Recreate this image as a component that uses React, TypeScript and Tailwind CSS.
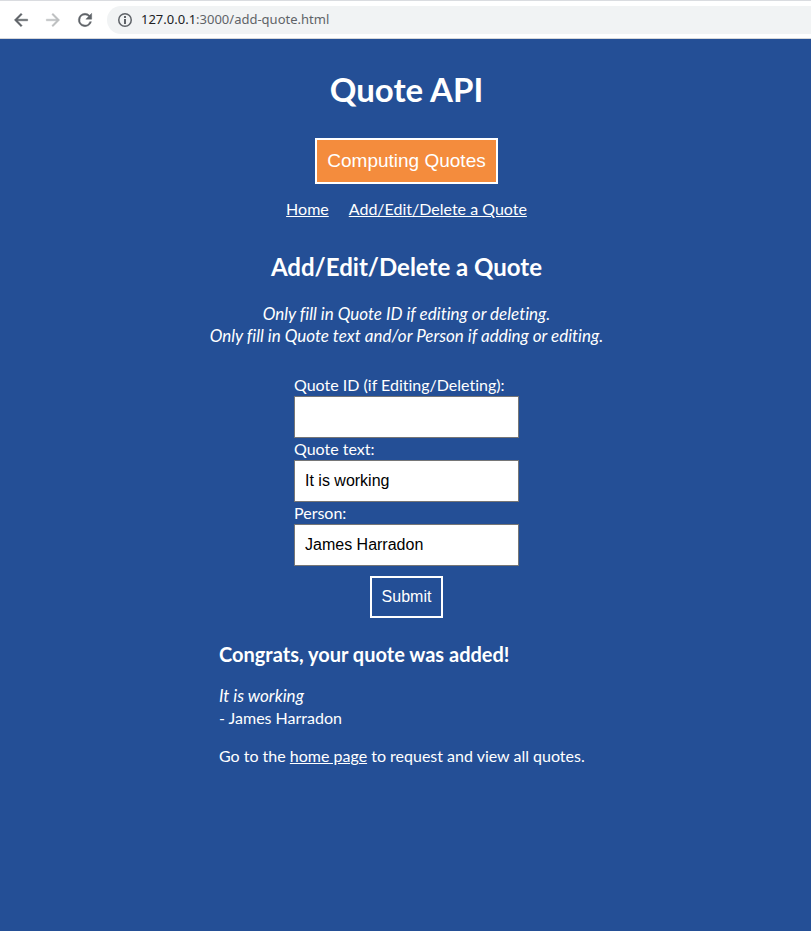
import type { ReactNode } from "react";

function BrowserBar() {
  return (
    <header className="flex h-[39px] items-center gap-[10px] border-t border-b border-t-[#dadce0] border-b-[#d5d6d9] bg-white pl-[9px] font-['Noto_Sans',sans-serif]">
      <div className="flex items-center gap-2 text-[#5f6368]">
        <button type="button" aria-label="Back" className="flex size-6 items-center justify-center">
          <svg viewBox="0 0 24 24" className="size-5" fill="currentColor" stroke="currentColor" strokeWidth="0.5">
            <path d="M20 11H7.83l5.59-5.59L12 4l-8 8 8 8 1.41-1.41L7.83 13H20v-2z" />
          </svg>
        </button>
        <button type="button" aria-label="Forward" className="flex size-6 items-center justify-center text-[#bdbfc1]">
          <svg viewBox="0 0 24 24" className="size-5" fill="currentColor" stroke="currentColor" strokeWidth="0.5">
            <path d="M12 4l-1.41 1.41L16.17 11H4v2h12.17l-5.58 5.59L12 20l8-8z" />
          </svg>
        </button>
        <button type="button" aria-label="Reload" className="flex size-6 items-center justify-center">
          <svg viewBox="0 0 24 24" className="size-5" fill="currentColor" stroke="currentColor" strokeWidth="0.5">
            <path d="M17.65 6.35A7.96 7.96 0 0 0 12 4a8 8 0 1 0 7.73 10h-2.08A6 6 0 1 1 12 6c1.66 0 3.14.69 4.22 1.78L13 11h7V4l-2.35 2.35z" />
          </svg>
        </button>
      </div>
      <div className="flex h-7 flex-1 items-center gap-2 rounded-l-full bg-[#f1f3f4] pl-[10px]">
        <svg viewBox="0 0 16 16" className="size-4 text-[#5f6368]" fill="none" stroke="currentColor" strokeWidth="1.5">
          <circle cx="8" cy="8" r="6.25" />
          <path d="M8 4v2M8 7v5" strokeWidth="2" />
        </svg>
        <p className="text-[13px] text-[#5f6368]">
          <span className="text-[#202124]">127.0.0.1</span>:3000/add-quote.html
        </p>
      </div>
    </header>
  );
}

function PageLink({ children }: { children: ReactNode }) {
  return (
    <a href="#" className="underline">
      {children}
    </a>
  );
}

function Field({ id, label, value }: { id: string; label: string; value?: string }) {
  return (
    <div className="flex flex-col">
      <label htmlFor={id}>{label}</label>
      <input
        id={id}
        type="text"
        defaultValue={value}
        className="h-[42px] border border-[#767676] bg-white px-[10px] font-['Liberation_Sans',sans-serif] text-black"
      />
    </div>
  );
}

export default function App() {
  return (
    <div className="flex min-h-screen flex-col bg-[#244f96]">
      <BrowserBar />
      <main className="flex flex-1 flex-col items-center pt-7 pr-2 pl-[10px] font-['Lato','Open_Sans',sans-serif] text-[16px] leading-[22px] text-white [font-variant-ligatures:none]">
        <h1 className="text-[33px] leading-[44px] font-bold">Quote API</h1>
        <button
          type="button"
          className="mt-[27px] h-[46px] border-2 border-white bg-[#f48c3d] px-[10px] font-['Liberation_Sans',sans-serif] text-[19px]"
        >
          Computing Quotes
        </button>
        <nav className="mt-[14px] flex gap-5">
          <PageLink>Home</PageLink>
          <PageLink>Add/Edit/Delete a Quote</PageLink>
        </nav>
        <h2 className="mt-[30px] text-[24px] leading-[33px] font-bold">Add/Edit/Delete a Quote</h2>
        <p className="mt-5 text-center text-[17px] italic">
          Only fill in Quote ID if editing or deleting.
          <br />
          Only fill in Quote text and/or Person if adding or editing.
        </p>
        <form className="mt-[27px] flex w-[225px] flex-col" onSubmit={(e) => e.preventDefault()}>
          <Field id="quote-id" label="Quote ID (if Editing/Deleting):" />
          <Field id="quote-text" label="Quote text:" value="It is working" />
          <Field id="person" label="Person:" value="James Harradon" />
          <button
            type="submit"
            className="mt-[10px] h-[42px] self-center border-2 border-white px-[10px] font-['Liberation_Sans',sans-serif]"
          >
            Submit
          </button>
        </form>
        <section className="mt-[23px] w-[375px] max-w-full">
          <h3 className="text-[20px] leading-[26px] font-bold">Congrats, your quote was added!</h3>
          <p className="mt-[18px]">
            <em className="text-[17px]">It is working</em>
            <br />- James Harradon
          </p>
          <p className="mt-4">
            Go to the <PageLink>home page</PageLink> to request and view all quotes.
          </p>
        </section>
      </main>
    </div>
  );
}
